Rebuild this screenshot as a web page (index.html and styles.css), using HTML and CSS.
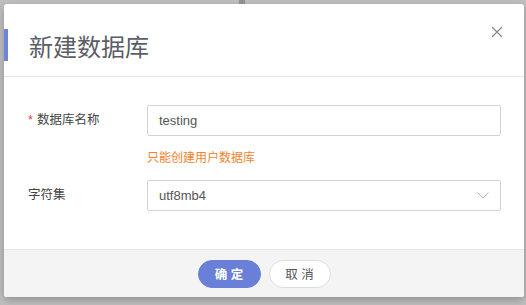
FILE: index.html
```html
<!DOCTYPE html>
<html>
<head>
<meta name="viewport" content="width=device-width, initial-scale=1">
<link rel="stylesheet" href="styles.css">
</head>
<body>

<div class="backdrop-mark"></div>

<div class="dialog">
  <div class="dialog-header">
    <span class="title-bar"></span>
    <h2 class="dialog-title">新建数据库</h2>
    <button class="close-btn" aria-label="close">
      <svg width="12" height="12" viewBox="0 0 12 12"><path d="M1 1L11 11M11 1L1 11" stroke="#8a8a8a" stroke-width="1.2" fill="none"/></svg>
    </button>
  </div>

  <div class="dialog-body">
    <div class="form-row">
      <label class="form-label"><span class="required">*</span>数据库名称</label>
      <div class="form-field">
        <input class="text-input" type="text" value="testing">
        <div class="hint">只能创建用户数据库</div>
      </div>
    </div>
    <div class="form-row">
      <label class="form-label">字符集</label>
      <div class="form-field">
        <div class="select-box">
          <span>utf8mb4</span>
          <svg width="12" height="7" viewBox="0 0 12 7"><path d="M0.5 0.5L6 6L11.5 0.5" stroke="#b5b5b5" stroke-width="1" fill="none"/></svg>
        </div>
      </div>
    </div>
  </div>

  <div class="dialog-footer">
    <button class="btn btn-primary">确 定</button>
    <button class="btn btn-default">取 消</button>
  </div>
</div>

</body>
</html>
```

FILE: styles.css
```css
body {
    margin: 0;
    background-color: #bfbfbf;
    font-family: "Liberation Sans", "Noto Sans CJK SC", sans-serif;
    height: 305px;
    overflow: hidden;
}

/* the thing peeking out behind the dialog */
.backdrop-mark {
    position: absolute;
    left: 239px;
    top: 0;
    width: 6px;
    height: 4px;
    background-color: #8e8e8e;
}

.dialog {
    margin: 4px 0 0 4px;
    width: 520px;
    height: 293px;
    background-color: #fff;
    border-radius: 3px;
    box-shadow: 0 3px 8px rgba(0, 0, 0, 0.25);
    display: flex;
    flex-direction: column;
    overflow: hidden;
}

/* Header */
.dialog-header {
    height: 72px;
    display: flex;
    align-items: center;
    border-bottom: 1px solid #e6e6e6;
    position: relative;
}

.title-bar {
    width: 4px;
    height: 32px;
    background-color: #6b85dd;
    margin-top: 10px;
}

.dialog-title {
    margin: 10px 0 0 21px;
    font-size: 24px;
    font-weight: normal;
    color: #5a5e66;
    letter-spacing: 0;
}

.close-btn {
    position: absolute;
    right: 21px;
    top: 22px;
    border: none;
    background: none;
    padding: 0;
    width: 12px;
    height: 12px;
    cursor: pointer;
}

/* Body */
.dialog-body {
    flex: 1;
    padding: 28px 23px 0 24px;
}

.form-row {
    display: flex;
    margin-bottom: 0;
}

.form-label {
    width: 119px;
    height: 31px;
    line-height: 31px;
    font-size: 12.5px;
    color: #444;
}

.required {
    color: #e0413b;
    margin-right: 4px;
}

.form-field {
    flex: 1;
}

.text-input, .select-box {
    box-sizing: border-box;
    width: 354px;
    height: 31px;
    border: 1px solid #d3d3d6;
    border-radius: 2px;
    padding: 0 11px;
    font-family: inherit;
    font-size: 13px;
    color: #555;
    outline: none;
    display: block;
}

.select-box {
    display: flex;
    align-items: center;
    justify-content: space-between;
}

.select-box svg {
    margin-right: 0;
}

.hint {
    height: 44px;
    line-height: 44px;
    font-size: 12px;
    color: #f5822a;
}

/* Footer */
.dialog-footer {
    height: 47px;
    border-top: 1px solid #e6e6e6;
    background-color: #f4f4f4;
    display: flex;
    align-items: center;
    justify-content: center;
    gap: 8px;
    padding-top: 0;
}

.btn {
    height: 28px;
    border-radius: 14px;
    font-family: inherit;
    font-size: 12.5px;
    cursor: pointer;
    padding: 0;
}

.btn-primary {
    width: 63px;
    border: 1px solid #6a80d8;
    background-color: #6a80d8;
    color: #fff;
    font-weight: bold;
}

.btn-default {
    width: 62px;
    border: 1px solid #ddd;
    background-color: #fff;
    color: #555;
}
```
